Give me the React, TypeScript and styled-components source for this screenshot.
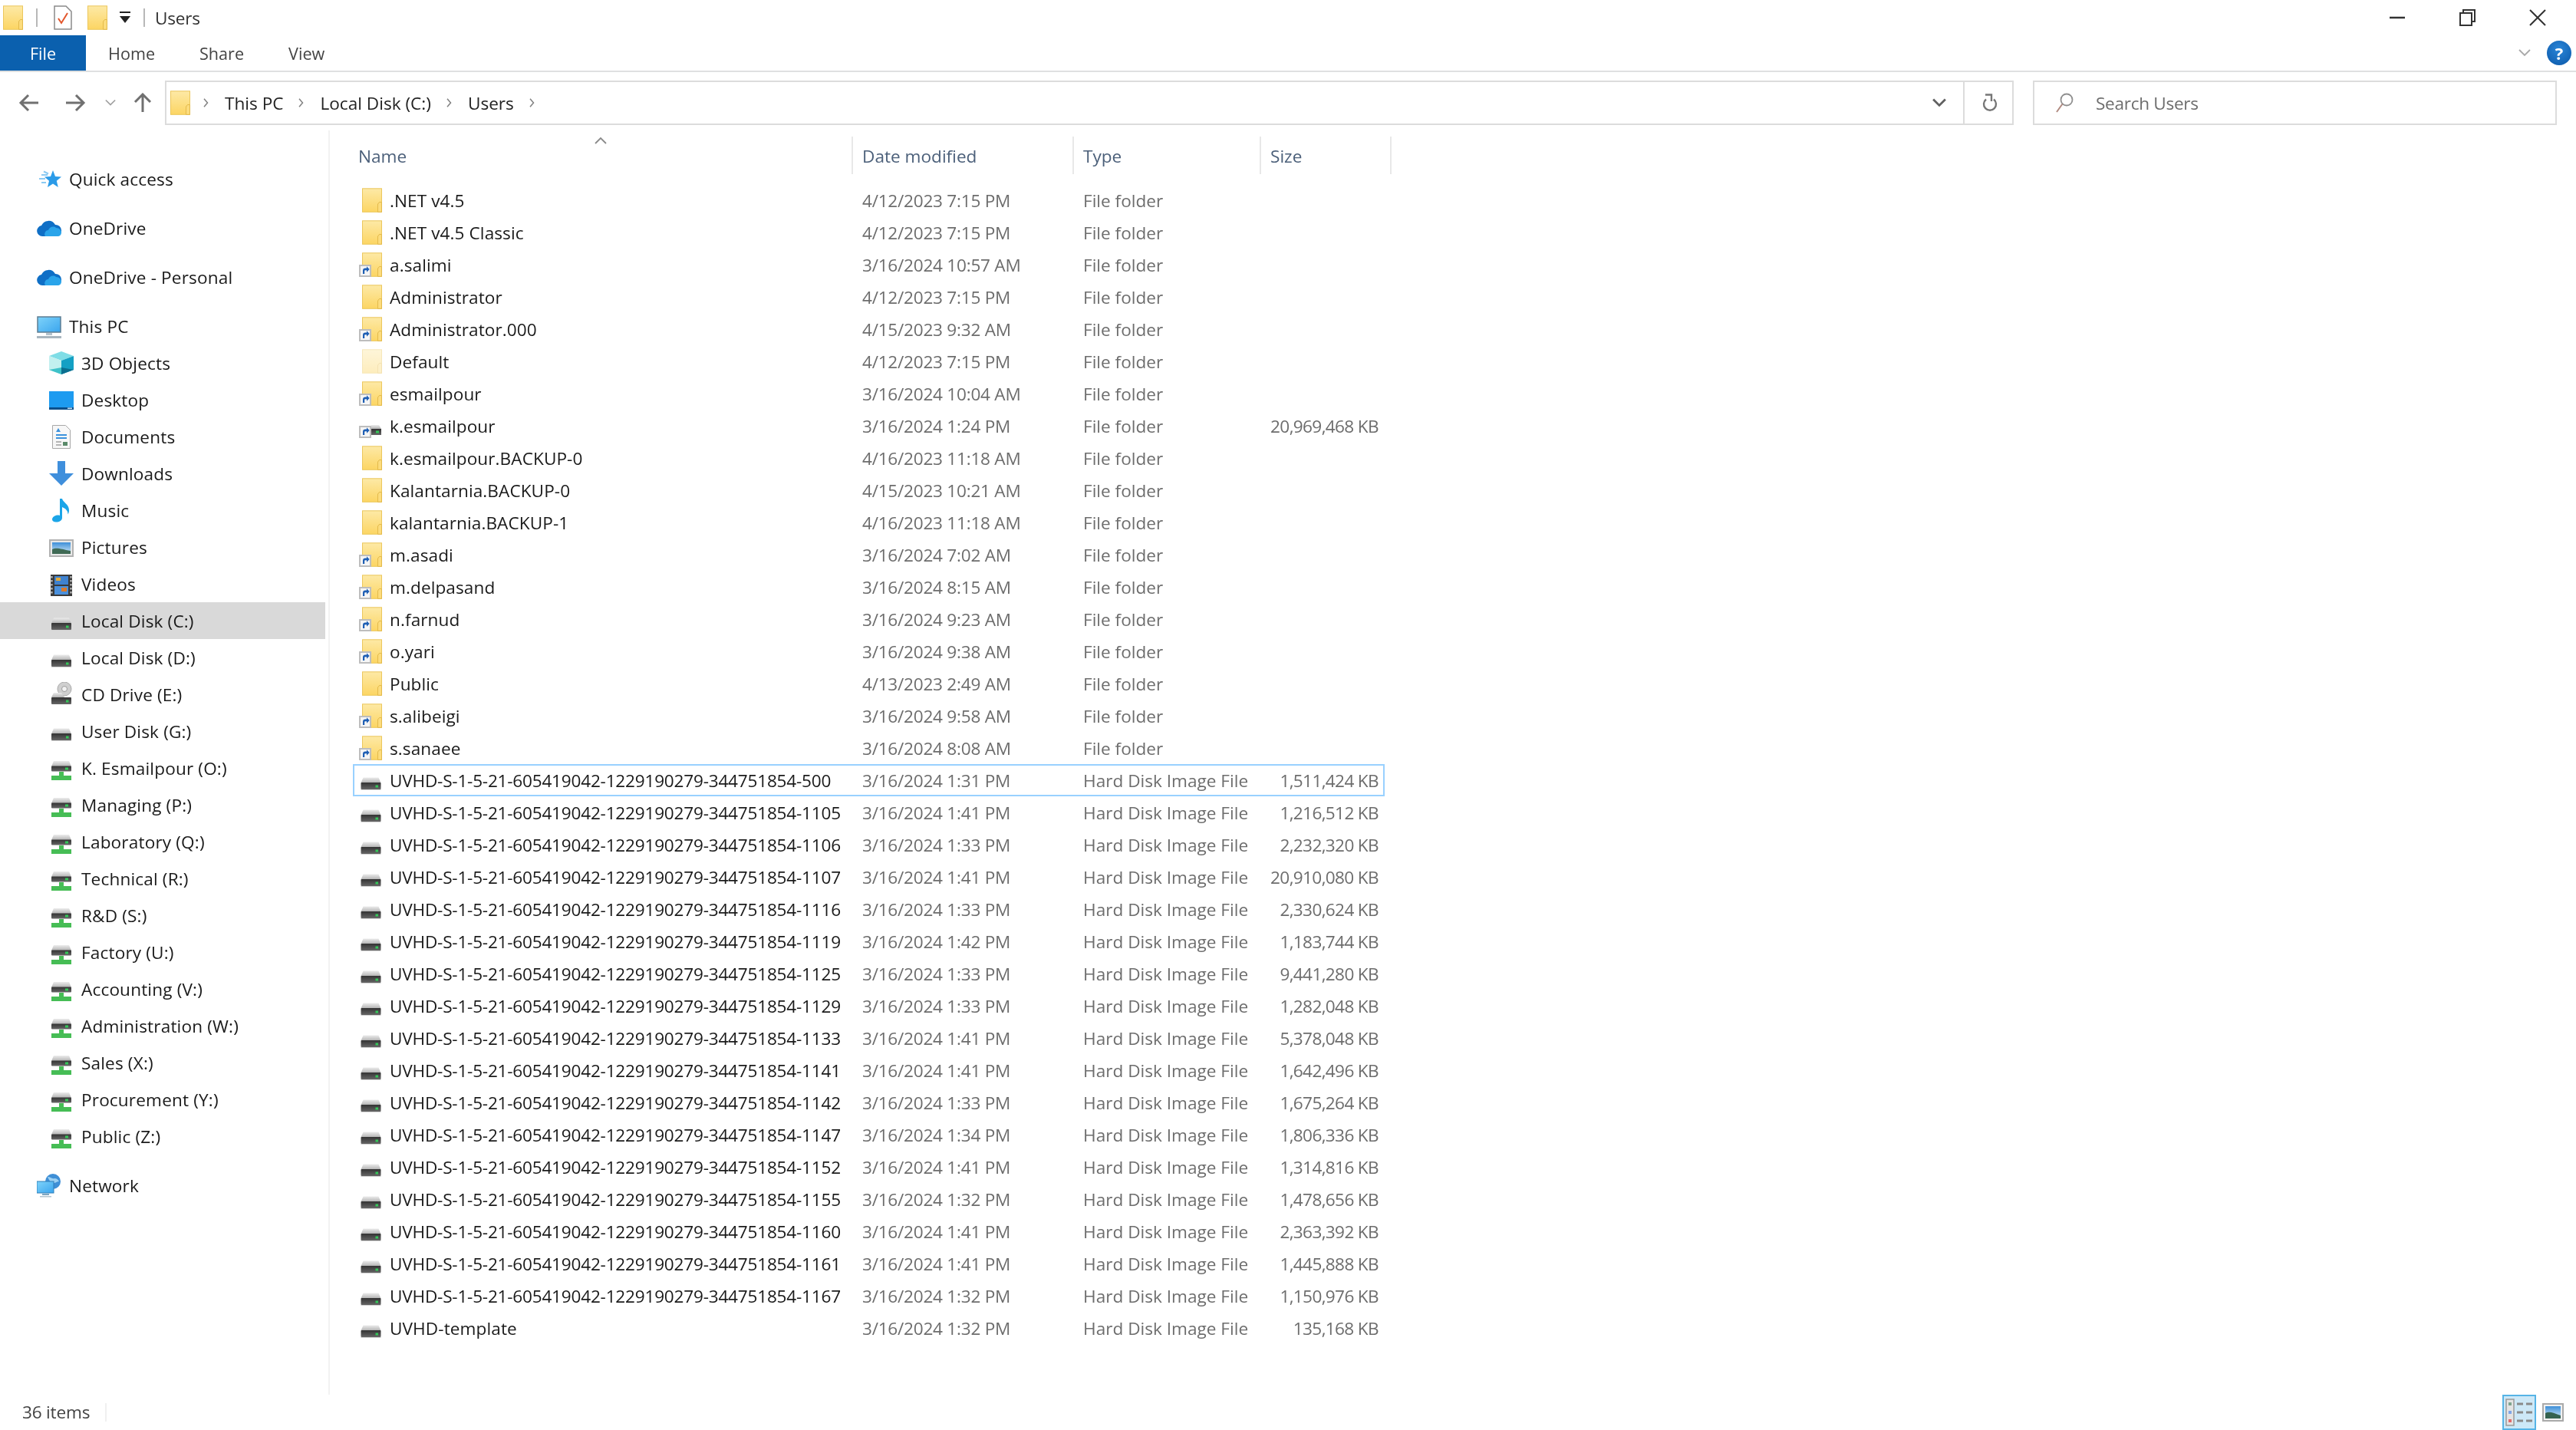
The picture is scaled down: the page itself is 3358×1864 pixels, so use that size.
import React from 'react'
import styled, { createGlobalStyle } from 'styled-components'

const GlobalStyle = createGlobalStyle`
  html, body {
    margin: 0;
    padding: 0;
    background: #fff;
  }
`

const Window = styled.div`
  width: 3358px;
  height: 1864px;
  display: flex;
  flex-direction: column;
  background: #fff;
  overflow: hidden;
  font-family: 'Open Sans', 'Noto Sans', sans-serif;
  font-size: 22.6px;
  color: #1a1a1a;
  filter: blur(0.7px);
  svg {
    display: block;
    flex: none;
  }
`

const HiddenDefs = styled.svg`
  position: absolute;
  width: 0;
  height: 0;
`

const TitleBar = styled.div`
  height: 46px;
  display: flex;
  align-items: center;
  padding-left: 4px;
`

const TitleDivider = styled.div<{ $gapLeft: number; $gapRight: number }>`
  width: 2px;
  height: 24px;
  background: #b8b8b8;
  margin: 0 ${(p) => p.$gapRight}px 0 ${(p) => p.$gapLeft}px;
`

const QuickGap = styled.div<{ $w: number }>`
  width: ${(p) => p.$w}px;
`

const TitleText = styled.span`
  color: #333;
  letter-spacing: -0.2px;
`

const WindowControls = styled.div`
  margin-left: auto;
  display: flex;
  padding-right: 4px;
`

const ControlButton = styled.div<{ $w?: number }>`
  width: ${(p) => p.$w ?? 92}px;
  height: 42px;
  display: flex;
  align-items: center;
  justify-content: center;
`

const Ribbon = styled.div`
  height: 48px;
  box-sizing: border-box;
  border-bottom: 2px solid #dfe0e1;
  display: flex;
  align-items: stretch;
  font-size: 21.6px;
`

const FileTab = styled.div`
  width: 112px;
  background: #0b60ae;
  color: #fff;
  display: flex;
  align-items: center;
  justify-content: center;
`

const RibbonTab = styled.div`
  padding: 0 29px;
  display: flex;
  align-items: center;
  color: #444;
`

const RibbonRight = styled.div`
  margin-left: auto;
  display: flex;
  align-items: center;
  gap: 21px;
  padding-right: 6px;
`

const HelpBadge = styled.div`
  width: 32px;
  height: 32px;
  border-radius: 50%;
  background: radial-gradient(circle at 50% 35%, #2a86d8, #0a57a8);
  color: #fff;
  font-size: 22px;
  font-weight: 700;
  line-height: 32px;
  text-align: center;
`

const NavBar = styled.div`
  height: 76px;
  box-sizing: border-box;
  padding: 11px 25px 7px 24px;
  display: flex;
  align-items: center;
`

const NavGap = styled.div<{ $w: number }>`
  width: ${(p) => p.$w}px;
`

const AddressBar = styled.div`
  flex: 1;
  height: 58px;
  box-sizing: border-box;
  border: 2px solid #dcdcdc;
  display: flex;
  align-items: center;
  padding-left: 5px;
`

const Crumbs = styled.div`
  display: flex;
  align-items: center;
  gap: 18px;
  margin-left: 15px;
  color: #222;
`

const AddressDrop = styled.div`
  margin-left: auto;
  width: 62px;
  height: 100%;
  display: flex;
  align-items: center;
  justify-content: center;
`

const RefreshButton = styled.div`
  width: 64px;
  height: 100%;
  box-sizing: border-box;
  padding-left: 4px;
  border-left: 2px solid #dcdcdc;
  display: flex;
  align-items: center;
  justify-content: center;
`

const SearchBox = styled.div`
  width: 683px;
  height: 58px;
  box-sizing: border-box;
  margin-left: 25px;
  border: 2px solid #dcdcdc;
  display: flex;
  align-items: center;
  gap: 29px;
  padding-left: 27px;
  color: #6d6d6d;
  letter-spacing: -0.3px;
`

const Body = styled.div`
  flex: 1;
  display: flex;
  min-height: 0;
`

const Sidebar = styled.nav`
  width: 430px;
  box-sizing: border-box;
  border-right: 2px solid #f2f2f2;
  padding: 39px 4px 0 0;
  letter-spacing: 0.15px;
`

const NavGroup = styled.div`
  margin-bottom: 16px;
`

const NavRow = styled.div<{ $child?: boolean; $selected?: boolean }>`
  height: 48px;
  display: flex;
  align-items: center;
  gap: 10px;
  padding-left: ${(p) => (p.$child ? 64 : 48)}px;
  background: ${(p) => (p.$selected ? '#d9d9d9' : 'transparent')};
`

const FilePane = styled.main`
  flex: 1;
  padding: 8px 0 0 30px;
  position: relative;
`

const HeaderRow = styled.div`
  display: grid;
  grid-template-columns: 652px 288px 244px 170px;
  width: 1354px;
  height: 49px;
  margin-bottom: 13px;
`

const HeaderCell = styled.div<{ $first?: boolean }>`
  box-sizing: border-box;
  border-right: 2px solid #e8e8e8;
  padding-left: ${(p) => (p.$first ? 7 : 12)}px;
  padding-top: 1px;
  display: flex;
  align-items: center;
  color: #4c607a;
`

const SortCaret = styled.div`
  position: absolute;
  left: 345px;
  top: 6px;
`

const FileRow = styled.div<{ $selected?: boolean }>`
  display: grid;
  grid-template-columns: 652px 288px 244px 161px;
  width: 1345px;
  height: 42px;
  align-items: center;
  box-shadow: ${(p) => (p.$selected ? 'inset 0 0 0 2px #99d1ff' : 'none')};
`

const NameCell = styled.div<{ $digits?: boolean }>`
  display: flex;
  align-items: center;
  gap: 10px;
  padding-left: 6px;
  color: #1a1a1a;
  letter-spacing: ${(p) => (p.$digits ? '-0.22px' : '0.08px')};
`

const DateCell = styled.div`
  padding-left: 12px;
  color: #6d6d6d;
  letter-spacing: -0.25px;
`

const TypeCell = styled.div`
  padding-left: 12px;
  color: #6d6d6d;
`

const SizeCell = styled.div`
  padding-right: 8px;
  text-align: right;
  color: #6d6d6d;
  letter-spacing: -0.65px;
`

const StatusBar = styled.div`
  height: 46px;
  display: flex;
  align-items: center;
  padding: 0 16px 0 29px;
  color: #444;
`

const StatusCount = styled.div`
  padding-right: 20px;
  border-right: 2px solid #f0f0f0;
  line-height: 24px;
  letter-spacing: -0.2px;
`

const ViewButtons = styled.div`
  margin-left: auto;
  display: flex;
  align-items: center;
  gap: 8px;
`

const DetailsButton = styled.div`
  width: 44px;
  height: 46px;
  box-sizing: border-box;
  border: 2px solid #56b4e6;
  background: #cde8f7;
  display: flex;
  align-items: center;
  justify-content: center;
`

const Gradients = () => (
  <HiddenDefs aria-hidden='true'>
    <defs>
      <linearGradient id='folderFill' x1='0' y1='0' x2='0' y2='1'>
        <stop offset='0' stopColor='#fde9a6' />
        <stop offset='1' stopColor='#fcd563' />
      </linearGradient>
      <linearGradient id='driveTop' x1='0' y1='0' x2='0' y2='1'>
        <stop offset='0' stopColor='#ececec' />
        <stop offset='1' stopColor='#b2b2b2' />
      </linearGradient>
      <linearGradient id='driveBand' x1='0' y1='0' x2='0' y2='1'>
        <stop offset='0' stopColor='#333' />
        <stop offset='1' stopColor='#666' />
      </linearGradient>
      <linearGradient id='screenFill' x1='0' y1='0' x2='1' y2='1'>
        <stop offset='0' stopColor='#7fd3fa' />
        <stop offset='1' stopColor='#3aa5ee' />
      </linearGradient>
      <linearGradient id='skyFill' x1='0' y1='0' x2='0' y2='1'>
        <stop offset='0' stopColor='#3d8fd8' />
        <stop offset='1' stopColor='#d7ecf7' />
      </linearGradient>
    </defs>
  </HiddenDefs>
)

const Shortcut = () => (
  <g>
    <rect x='3' y='17' width='14' height='14' fill='#f6f6f6' stroke='#bdbdbd' strokeWidth='2' />
    <path d='M7 28v-4.500c0-2 1.300-3 3.200-3H12v-2.200l3.600 3.700-3.600 3.700v-2.400h-1.600c-.8 0-1.200.4-1.200 1.200V28z' fill='#1f5fb4' />
  </g>
)

const FolderIcon = ({ shortcut, faded, tight }: { shortcut?: boolean; faded?: boolean; tight?: boolean }) => (
  <svg width={tight ? 26 : 32} height={32} viewBox={tight ? '6 0 26 32' : '0 0 32 32'}>
    <g opacity={faded ? 0.42 : 1}>
      <rect x='6.500' y='.8' width='25' height='30.500' fill='url(#folderFill)' stroke='#ecc75c' />
      <path d='M26.500 31.300V21l2-2.500h3v12.800z' fill='#fcdc7d' stroke='#e3ba4b' />
    </g>
    {shortcut && <Shortcut />}
  </svg>
)

const DriveIcon = ({ list }: { list?: boolean }) => (
  <svg width={32} height={32} viewBox={list ? '-1.500 0 32 32' : '0 0 32 32'}>
    <path d='M6 12.500h20l3 7H3z' fill='url(#driveTop)' />
    <rect x='3' y='19' width='26' height='9' rx='1' fill='url(#driveBand)' />
    <rect x='22' y='22.500' width='3.500' height='3' fill='#34c759' />
    <rect x='3' y='28' width='26' height='1' fill='#d5d5d5' />
  </svg>
)

const LinkedDriveIcon = () => (
  <svg width={32} height={32} viewBox='0 0 32 32'>
    <path d='M18 15h10l3 5H16z' fill='url(#driveTop)' />
    <rect x='16' y='20' width='15' height='8' fill='url(#driveBand)' />
    <rect x='24' y='22.500' width='4' height='3' fill='#34c759' />
    <Shortcut />
  </svg>
)

const CdDriveIcon = () => (
  <svg width={32} height={32} viewBox='0 0 32 32'>
    <circle cx='20' cy='9' r='9' fill='#cfcfcf' stroke='#a9a9a9' />
    <circle cx='20' cy='9' r='3.500' fill='#f2f2f2' stroke='#9c9c9c' />
    <path d='M6 14h10l4 6H3z' fill='url(#driveTop)' />
    <rect x='3' y='20' width='26' height='9' rx='1' fill='url(#driveBand)' />
    <rect x='22' y='23.500' width='3.500' height='3' fill='#34c759' />
  </svg>
)

const NetDriveIcon = () => (
  <svg width={32} height={32} viewBox='0 0 32 32'>
    <path d='M6 7h20l3 7H3z' fill='url(#driveTop)' />
    <rect x='3' y='13.500' width='26' height='7' rx='1' fill='url(#driveBand)' />
    <rect x='21' y='15.500' width='4' height='3' fill='#34c759' />
    <path d='M13 21h6v5h10v6H3v-6h10z' fill='#46bd55' />
  </svg>
)

const StarIcon = () => (
  <svg width={32} height={32} viewBox='0 0 32 32'>
    <path d='M21 5l3 8 8 .6-6.200 5.200 2 8.200-6.800-4.500L14 27l2-8.200L10 13.600l8-.6z' fill='#2b9be8' />
    <path d='M6 11h8M3 16h8M6 21h6M9 6.500l6 3' stroke='#8ccaf2' strokeWidth='2' />
  </svg>
)

const CloudIcon = () => (
  <svg width={32} height={32} viewBox='0 0 32 32'>
    <path d='M7 27a7 7 0 0 1-1-13.900A10 10 0 0 1 24 12a7 7 0 0 1 1 15z' fill='#0f6fc6' />
    <path d='M11 27c-2-3 0-8 4-8 1-4 7-6 10-3 4 0 7 3 7 6s-2 5-5 5z' fill='#2aa4ea' />
  </svg>
)

const MonitorIcon = () => (
  <svg width={32} height={32} viewBox='0 0 32 32'>
    <rect x='1' y='4' width='30' height='20' fill='url(#screenFill)' stroke='#5d7d92' strokeWidth='1.500' />
    <rect x='12' y='25' width='8' height='3' fill='#b4c2cc' />
    <rect x='0' y='29' width='32' height='3' fill='#a9b6bf' />
  </svg>
)

const CubeIcon = () => (
  <svg width={32} height={32} viewBox='0 0 32 32'>
    <path d='M16 1l16 6-16 6L0 7z' fill='#7fdde6' />
    <path d='M0 7l16 6v18L0 25z' fill='#c2f0ef' />
    <path d='M32 7l-16 6v18l16-6z' fill='#14a0c4' />
    <path d='M16 22l16 3-16 6z' fill='#0b6f8f' />
    <path d='M16 22L0 25l16 6z' fill='#3fc2c9' />
  </svg>
)

const DesktopIcon = () => (
  <svg width={32} height={32} viewBox='0 0 32 32'>
    <rect x='0' y='5' width='32' height='24' fill='#1d9bf0' />
    <rect x='0' y='26' width='32' height='3' fill='#0c4f8a' />
    <rect x='24' y='26.500' width='6' height='1.500' fill='#c8e4f8' />
  </svg>
)

const DocumentsIcon = () => (
  <svg width={32} height={32} viewBox='0 0 32 32'>
    <path d='M4.500 1.500h17l6 6v24h-23z' fill='#f7f7f7' stroke='#a8a8a8' />
    <path d='M9 14h14M9 18h14' stroke='#3c92dc' strokeWidth='2' />
    <path d='M9 23h7M9 27h7' stroke='#b5b5b5' strokeWidth='2' />
    <rect x='18' y='23' width='6' height='5' fill='#5a8a6a' />
    <path d='M12 5l3 5H9z' fill='#3c92dc' />
  </svg>
)

const DownloadsIcon = () => (
  <svg width={32} height={32} viewBox='0 0 32 32'>
    <path d='M11 0h10v16h11L16 32 0 16h11z' fill='#3f8fdc' />
  </svg>
)

const MusicIcon = () => (
  <svg width={32} height={32} viewBox='0 0 32 32'>
    <path d='M14 1h3c1 5 9 7 9 15 0 2-.5 4-1.500 5.500.3-5-3.500-8-7.500-9.500v14c0 3.500-3.500 5.500-8 5.500-3 0-5-1.500-5-3.500 0-3 3.500-5.500 7.500-5.500 1 0 1.800.1 2.500.4z' fill='#1ba5e8' />
  </svg>
)

const PicturesIcon = () => (
  <svg width={32} height={32} viewBox='0 0 32 32'>
    <rect x='1' y='7' width='30' height='21' fill='#e8e8e8' stroke='#b2b2b2' strokeWidth='2' />
    <rect x='4' y='10' width='24' height='15' fill='url(#skyFill)' />
    <path d='M4 19c6-3 12 0 24 2v4H4z' fill='#3f6a55' />
  </svg>
)

const VideosIcon = () => (
  <svg width={32} height={32} viewBox='0 0 32 32'>
    <rect x='2' y='4' width='28' height='28' fill='#3a3a3a' />
    <rect x='7' y='6' width='18' height='11' fill='#3f82cf' />
    <rect x='7' y='19' width='18' height='11' fill='#4a90dc' />
    <rect x='9' y='8' width='6' height='4' fill='#e0a93b' />
    <rect x='16' y='21' width='7' height='5' fill='#d9792b' />
    <path d='M3.500 6v24M28.500 6v24' stroke='#c9c9c9' strokeWidth='2' strokeDasharray='2.500 2.500' />
  </svg>
)

const NetworkIcon = () => (
  <svg width={32} height={32} viewBox='0 0 32 32'>
    <circle cx='21' cy='11' r='10' fill='#3f8fd6' />
    <path d='M14 5c4 0 5 3 9 2 3 0 5 2 6 4-3 0-4 2-7 2s-6-3-8-8z' fill='#9cd0f2' />
    <rect x='0' y='11' width='22' height='15' fill='url(#screenFill)' stroke='#2f7fb8' />
    <rect x='7' y='27' width='9' height='2' fill='#7fa7c2' />
    <rect x='4' y='30' width='15' height='1.500' fill='#b2c4d0' />
  </svg>
)

const DocCheckIcon = () => (
  <svg width={24} height={32} viewBox='0 0 24 32'>
    <path d='M1 1h15l7 7v23H1z' fill='#fff' stroke='#8a8a8a' strokeWidth='1.500' />
    <path d='M6 17l4 6 8-13' fill='none' stroke='#e2552b' strokeWidth='2' />
  </svg>
)

const QuickDropIcon = () => (
  <svg width={14} height={16} viewBox='0 0 14 16'>
    <rect x='0' y='0' width='14' height='2' fill='#222' />
    <path d='M0 6h14l-7 9z' fill='#222' />
  </svg>
)

const Arrow = ({ dir, color }: { dir: 'left' | 'right' | 'up'; color: string }) => {
  const turn = dir === 'left' ? 0 : dir === 'right' ? 180 : 90
  return (
    <svg width={28} height={26} viewBox='0 0 28 26'>
      <g transform={`rotate(${turn} 14 13)`}>
        <path d='M26 13H3M13 3L3 13l10 10' fill='none' stroke={color} strokeWidth='3' />
      </g>
    </svg>
  )
}

const Chevron = ({ dir, size, color, weight }: { dir: 'right' | 'down' | 'up'; size: number; color: string; weight: number }) => {
  const d = dir === 'right' ? 'M4 1l6 7-6 7' : dir === 'down' ? 'M1 4l7 7 7-7' : 'M1 11l7-7 7 7'
  return (
    <svg width={size} height={size} viewBox='0 0 16 16'>
      <path d={d} fill='none' stroke={color} strokeWidth={weight} />
    </svg>
  )
}

const RefreshIcon = () => (
  <svg width={20} height={24} viewBox='0 0 20 24'>
    <path d='M5 7.500a8 8 0 1 0 10 0' fill='none' stroke='#767676' strokeWidth='2.400' />
    <path d='M4 1.500h8V10' fill='none' stroke='#767676' strokeWidth='2.400' />
  </svg>
)

const SearchIcon = () => (
  <svg width={24} height={26} viewBox='0 0 24 26'>
    <circle cx='15' cy='9' r='7.500' fill='none' stroke='#8f8f8f' strokeWidth='1.800' />
    <path d='M9.500 14.500L2 25' stroke='#b08a80' strokeWidth='2' />
  </svg>
)

const ListViewIcon = () => (
  <svg width={36} height={36} viewBox='0 0 36 36'>
    <rect x='1' y='1' width='10' height='34' fill='#e4e4e4' stroke='#9a9a9a' strokeWidth='1.500' />
    <rect x='4' y='5' width='4' height='4' fill='#7fa58f' />
    <rect x='4' y='16' width='4' height='4' fill='#7fa6e8' />
    <rect x='4' y='27' width='4' height='4' fill='#e46a6a' />
    <path d='M15 7h8M27 7h8M15 18h8M27 18h8M15 29h8M27 29h8' stroke='#8a8a8a' strokeWidth='3' />
  </svg>
)

const LargeViewIcon = () => (
  <svg width={28} height={24} viewBox='0 0 28 24'>
    <rect x='1' y='1' width='26' height='22' fill='#f0f0f0' stroke='#aaaaaa' strokeWidth='2' />
    <rect x='4' y='4' width='20' height='16' fill='url(#skyFill)' />
    <path d='M4 13c5-3 11 0 20 3v4H4z' fill='#35624f' />
  </svg>
)

type IconKind = 'folder' | 'folderLink' | 'folderFaded' | 'driveLink'

const fileIcon = (kind: IconKind) => {
  if (kind === 'folder') return <FolderIcon />
  if (kind === 'folderLink') return <FolderIcon shortcut />
  if (kind === 'folderFaded') return <FolderIcon faded />
  return <LinkedDriveIcon />
}

const folders: [string, string, IconKind, string?][] = [
  ['.NET v4.5', '4/12/2023 7:15 PM', 'folder'],
  ['.NET v4.5 Classic', '4/12/2023 7:15 PM', 'folder'],
  ['a.salimi', '3/16/2024 10:57 AM', 'folderLink'],
  ['Administrator', '4/12/2023 7:15 PM', 'folder'],
  ['Administrator.000', '4/15/2023 9:32 AM', 'folderLink'],
  ['Default', '4/12/2023 7:15 PM', 'folderFaded'],
  ['esmailpour', '3/16/2024 10:04 AM', 'folderLink'],
  ['k.esmailpour', '3/16/2024 1:24 PM', 'driveLink', '20,969,468 KB'],
  ['k.esmailpour.BACKUP-0', '4/16/2023 11:18 AM', 'folder'],
  ['Kalantarnia.BACKUP-0', '4/15/2023 10:21 AM', 'folder'],
  ['kalantarnia.BACKUP-1', '4/16/2023 11:18 AM', 'folder'],
  ['m.asadi', '3/16/2024 7:02 AM', 'folderLink'],
  ['m.delpasand', '3/16/2024 8:15 AM', 'folderLink'],
  ['n.farnud', '3/16/2024 9:23 AM', 'folderLink'],
  ['o.yari', '3/16/2024 9:38 AM', 'folderLink'],
  ['Public', '4/13/2023 2:49 AM', 'folder'],
  ['s.alibeigi', '3/16/2024 9:58 AM', 'folderLink'],
  ['s.sanaee', '3/16/2024 8:08 AM', 'folderLink']
]

const images: [string, string, string][] = [
  ['500', '1:31 PM', '1,511,424 KB'],
  ['1105', '1:41 PM', '1,216,512 KB'],
  ['1106', '1:33 PM', '2,232,320 KB'],
  ['1107', '1:41 PM', '20,910,080 KB'],
  ['1116', '1:33 PM', '2,330,624 KB'],
  ['1119', '1:42 PM', '1,183,744 KB'],
  ['1125', '1:33 PM', '9,441,280 KB'],
  ['1129', '1:33 PM', '1,282,048 KB'],
  ['1133', '1:41 PM', '5,378,048 KB'],
  ['1141', '1:41 PM', '1,642,496 KB'],
  ['1142', '1:33 PM', '1,675,264 KB'],
  ['1147', '1:34 PM', '1,806,336 KB'],
  ['1152', '1:41 PM', '1,314,816 KB'],
  ['1155', '1:32 PM', '1,478,656 KB'],
  ['1160', '1:41 PM', '2,363,392 KB'],
  ['1161', '1:41 PM', '1,445,888 KB'],
  ['1167', '1:32 PM', '1,150,976 KB']
]

const pcFolders: [string, React.ReactNode][] = [
  ['3D Objects', <CubeIcon />],
  ['Desktop', <DesktopIcon />],
  ['Documents', <DocumentsIcon />],
  ['Downloads', <DownloadsIcon />],
  ['Music', <MusicIcon />],
  ['Pictures', <PicturesIcon />],
  ['Videos', <VideosIcon />]
]

const drives: [string, React.ReactNode][] = [
  ['Local Disk (C:)', <DriveIcon />],
  ['Local Disk (D:)', <DriveIcon />],
  ['CD Drive (E:)', <CdDriveIcon />],
  ['User Disk (G:)', <DriveIcon />],
  ['K. Esmailpour (O:)', <NetDriveIcon />],
  ['Managing (P:)', <NetDriveIcon />],
  ['Laboratory (Q:)', <NetDriveIcon />],
  ['Technical (R:)', <NetDriveIcon />],
  ['R&D (S:)', <NetDriveIcon />],
  ['Factory (U:)', <NetDriveIcon />],
  ['Accounting (V:)', <NetDriveIcon />],
  ['Administration (W:)', <NetDriveIcon />],
  ['Sales (X:)', <NetDriveIcon />],
  ['Procurement (Y:)', <NetDriveIcon />],
  ['Public (Z:)', <NetDriveIcon />]
]

export default function App() {
  return (
    <Window>
      <GlobalStyle />
      <Gradients />

      <TitleBar>
        <FolderIcon tight />
        <TitleDivider $gapLeft={17} $gapRight={21} />
        <DocCheckIcon />
        <QuickGap $w={20} />
        <FolderIcon tight />
        <QuickGap $w={16} />
        <QuickDropIcon />
        <TitleDivider $gapLeft={17} $gapRight={13} />
        <TitleText>Users</TitleText>
        <WindowControls>
          <ControlButton $w={90}>
            <svg width={22} height={22} viewBox='0 0 22 22'>
              <path d='M1 11h20' stroke='#333' strokeWidth='2.500' />
            </svg>
          </ControlButton>
          <ControlButton>
            <svg width={22} height={22} viewBox='0 0 22 22'>
              <path d='M6 5V1h15v15h-4' fill='none' stroke='#333' strokeWidth='2' />
              <rect x='2' y='5' width='15' height='16' fill='none' stroke='#333' strokeWidth='2' />
            </svg>
          </ControlButton>
          <ControlButton>
            <svg width={22} height={22} viewBox='0 0 22 22'>
              <path d='M1 1l20 20M21 1L1 21' stroke='#333' strokeWidth='2' />
            </svg>
          </ControlButton>
        </WindowControls>
      </TitleBar>

      <Ribbon>
        <FileTab>File</FileTab>
        <RibbonTab>Home</RibbonTab>
        <RibbonTab>Share</RibbonTab>
        <RibbonTab>View</RibbonTab>
        <RibbonRight>
          <Chevron dir='down' size={16} color='#a9a9a9' weight={1.800} />
          <HelpBadge>?</HelpBadge>
        </RibbonRight>
      </Ribbon>

      <NavBar>
        <Arrow dir='left' color='#707070' />
        <NavGap $w={32} />
        <Arrow dir='right' color='#707070' />
        <NavGap $w={25} />
        <Chevron dir='down' size={14} color='#a0a0a0' weight={2} />
        <NavGap $w={21} />
        <Arrow dir='up' color='#707070' />
        <NavGap $w={15} />
        <AddressBar>
          <FolderIcon tight />
          <Crumbs>
            <Chevron dir='right' size={12} color='#808080' weight={2} />
            <span>This PC</span>
            <Chevron dir='right' size={12} color='#808080' weight={2} />
            <span>Local Disk (C:)</span>
            <Chevron dir='right' size={12} color='#808080' weight={2} />
            <span>Users</span>
            <Chevron dir='right' size={12} color='#808080' weight={2} />
          </Crumbs>
          <AddressDrop>
            <Chevron dir='down' size={18} color='#606060' weight={2.500} />
          </AddressDrop>
          <RefreshButton>
            <RefreshIcon />
          </RefreshButton>
        </AddressBar>
        <SearchBox>
          <SearchIcon />
          <span>Search Users</span>
        </SearchBox>
      </NavBar>

      <Body>
        <Sidebar>
          <NavGroup>
            <NavRow>
              <StarIcon />
              Quick access
            </NavRow>
          </NavGroup>
          <NavGroup>
            <NavRow>
              <CloudIcon />
              OneDrive
            </NavRow>
          </NavGroup>
          <NavGroup>
            <NavRow>
              <CloudIcon />
              OneDrive - Personal
            </NavRow>
          </NavGroup>
          <NavGroup>
            <NavRow>
              <MonitorIcon />
              This PC
            </NavRow>
            {pcFolders.map(([label, icon]) => (
              <NavRow $child key={label}>
                {icon}
                {label}
              </NavRow>
            ))}
            {drives.map(([label, icon], i) => (
              <NavRow $child $selected={i === 0} key={label}>
                {icon}
                {label}
              </NavRow>
            ))}
          </NavGroup>
          <NavGroup>
            <NavRow>
              <NetworkIcon />
              Network
            </NavRow>
          </NavGroup>
        </Sidebar>

        <FilePane>
          <HeaderRow>
            <HeaderCell $first>Name</HeaderCell>
            <HeaderCell>Date modified</HeaderCell>
            <HeaderCell>Type</HeaderCell>
            <HeaderCell>Size</HeaderCell>
          </HeaderRow>
          <SortCaret>
            <Chevron dir='up' size={16} color='#8a8a8a' weight={1.800} />
          </SortCaret>

          {folders.map(([name, date, kind, size]) => (
            <FileRow key={name}>
              <NameCell>
                {fileIcon(kind)}
                {name}
              </NameCell>
              <DateCell>{date}</DateCell>
              <TypeCell>File folder</TypeCell>
              <SizeCell>{size}</SizeCell>
            </FileRow>
          ))}
          {images.map(([id, time, size], i) => (
            <FileRow $selected={i === 0} key={id}>
              <NameCell $digits>
                <DriveIcon list />
                {`UVHD-S-1-5-21-605419042-1229190279-344751854-${id}`}
              </NameCell>
              <DateCell>{`3/16/2024 ${time}`}</DateCell>
              <TypeCell>Hard Disk Image File</TypeCell>
              <SizeCell>{size}</SizeCell>
            </FileRow>
          ))}
          <FileRow>
            <NameCell>
              <DriveIcon list />
              UVHD-template
            </NameCell>
            <DateCell>3/16/2024 1:32 PM</DateCell>
            <TypeCell>Hard Disk Image File</TypeCell>
            <SizeCell>135,168 KB</SizeCell>
          </FileRow>
        </FilePane>
      </Body>

      <StatusBar>
        <StatusCount>36 items</StatusCount>
        <ViewButtons>
          <DetailsButton>
            <ListViewIcon />
          </DetailsButton>
          <LargeViewIcon />
        </ViewButtons>
      </StatusBar>
    </Window>
  )
}
